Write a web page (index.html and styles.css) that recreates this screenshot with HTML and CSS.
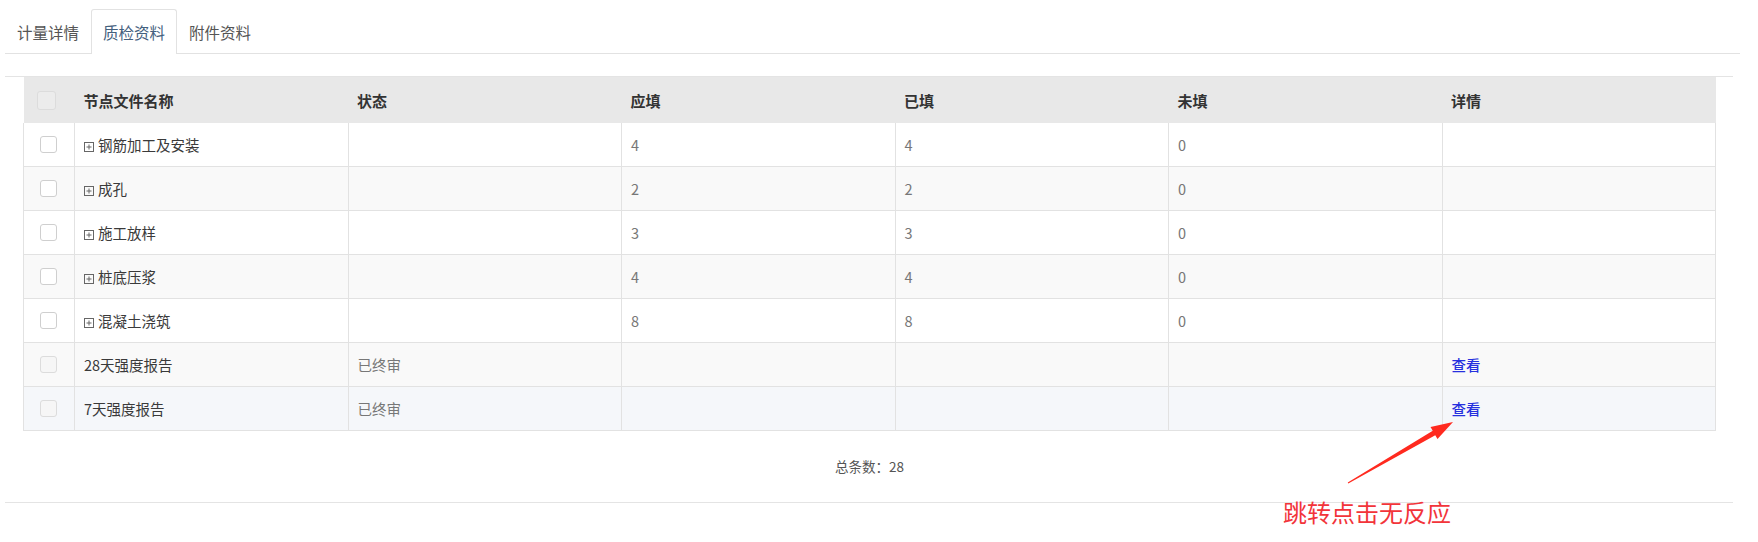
FILE: index.html
```html
<!DOCTYPE html>
<html lang="zh-CN">
<head>
    <meta charset="UTF-8">
    <title>质检资料</title>
    <link rel="stylesheet" href="styles.css">
</head>
<body>
    <div class="page">
        <ul class="tabs">
            <li class="tab">计量详情</li>
            <li class="tab active">质检资料</li>
            <li class="tab">附件资料</li>
        </ul>

        <div class="panel">
            <table class="grid">
                <colgroup>
                    <col class="col-check">
                    <col><col><col><col><col><col>
                </colgroup>
                <thead>
                    <tr>
                        <th class="check"><span class="cb cb-head"></span></th>
                        <th>节点文件名称</th>
                        <th>状态</th>
                        <th>应填</th>
                        <th>已填</th>
                        <th>未填</th>
                        <th>详情</th>
                    </tr>
                </thead>
                <tbody>
                    <tr>
                        <td class="check"><span class="cb"></span></td>
                        <td class="name"><svg class="expand" viewBox="0 0 10 10"><rect x="0.5" y="0.5" width="9" height="9" /><path d="M2.5 5h5M5 2.5v5" /></svg>钢筋加工及安装</td>
                        <td></td>
                        <td class="num">4</td>
                        <td class="num">4</td>
                        <td class="num">0</td>
                        <td></td>
                    </tr>
                    <tr>
                        <td class="check"><span class="cb"></span></td>
                        <td class="name"><svg class="expand" viewBox="0 0 10 10"><rect x="0.5" y="0.5" width="9" height="9" /><path d="M2.5 5h5M5 2.5v5" /></svg>成孔</td>
                        <td></td>
                        <td class="num">2</td>
                        <td class="num">2</td>
                        <td class="num">0</td>
                        <td></td>
                    </tr>
                    <tr>
                        <td class="check"><span class="cb"></span></td>
                        <td class="name"><svg class="expand" viewBox="0 0 10 10"><rect x="0.5" y="0.5" width="9" height="9" /><path d="M2.5 5h5M5 2.5v5" /></svg>施工放样</td>
                        <td></td>
                        <td class="num">3</td>
                        <td class="num">3</td>
                        <td class="num">0</td>
                        <td></td>
                    </tr>
                    <tr>
                        <td class="check"><span class="cb"></span></td>
                        <td class="name"><svg class="expand" viewBox="0 0 10 10"><rect x="0.5" y="0.5" width="9" height="9" /><path d="M2.5 5h5M5 2.5v5" /></svg>桩底压浆</td>
                        <td></td>
                        <td class="num">4</td>
                        <td class="num">4</td>
                        <td class="num">0</td>
                        <td></td>
                    </tr>
                    <tr>
                        <td class="check"><span class="cb"></span></td>
                        <td class="name"><svg class="expand" viewBox="0 0 10 10"><rect x="0.5" y="0.5" width="9" height="9" /><path d="M2.5 5h5M5 2.5v5" /></svg>混凝土浇筑</td>
                        <td></td>
                        <td class="num">8</td>
                        <td class="num">8</td>
                        <td class="num">0</td>
                        <td></td>
                    </tr>
                    <tr>
                        <td class="check"><span class="cb cb-off"></span></td>
                        <td class="name">28天强度报告</td>
                        <td class="status">已终审</td>
                        <td></td>
                        <td></td>
                        <td></td>
                        <td><a class="view" href="#">查看</a></td>
                    </tr>
                    <tr class="hover">
                        <td class="check"><span class="cb cb-off"></span></td>
                        <td class="name">7天强度报告</td>
                        <td class="status">已终审</td>
                        <td></td>
                        <td></td>
                        <td></td>
                        <td><a class="view" href="#">查看</a></td>
                    </tr>
                </tbody>
            </table>
            <div class="total">总条数：28</div>
        </div>

        <!-- red note drawn over the page -->
        <svg class="note-arrow" viewBox="0 0 120 75" width="120" height="75">
            <polygon points="8.25,68.43 95.25,20.16 97.5,24.06 113,7 90.5,11.94 92.75,15.84 7.75,67.57" />
        </svg>
        <div class="note-text">跳转点击无反应</div>
    </div>
</body>
</html>
```

FILE: styles.css
```css
body {
    margin: 0;
    background: #fff;
    font-family: "Noto Sans CJK SC", "Microsoft YaHei", sans-serif;
    color: #333;
}
.page {
    position: relative;
    padding: 9px 18px 0 5px;
    height: 542px;
    box-sizing: border-box;
}

/* tabs */
.tabs {
    list-style: none;
    margin: 0;
    padding: 0;
    display: flex;
    border-bottom: 1px solid #e2e2e2;
}
.tab {
    height: 44px;
    line-height: 44px;
    padding: 0 11px;
    font-size: 15.5px;
    color: #555;
    border: 1px solid transparent;
    border-bottom: none;
    margin-bottom: -1px;
    box-sizing: border-box;
}
.tab.active {
    border-color: #e2e2e2;
    border-radius: 3px 3px 0 0;
    background: #fff;
    height: 45px;
    color: #44607e;
}

/* panel with the grid */
.panel {
    margin-top: 22px;
    margin-right: 7px;
    padding: 0 17px 0 18px;
    border-top: 1px solid #e4e4e4;
    border-bottom: 1px solid #e4e4e4;
}
.grid {
    width: 100%;
    table-layout: fixed;
    border-collapse: collapse;
    font-size: 14.5px;
}
.col-check {
    width: 51px;
}
.grid th {
    height: 46px;
    padding: 0 9px;
    text-align: left;
    font-weight: bold;
    font-size: 15px;
    color: #333;
    background: #e8e8e8;
}
.grid td {
    height: 43px;
    padding: 0 9px;
    border: 1px solid #e2e2e2;
    border-top: none;
    color: #666;
}
.grid tbody tr:nth-child(even) td {
    background: #f9f9f9;
}
.grid tbody tr.hover td {
    background: #f5f7fa;
}
.grid th.check {
    padding: 0 0 0 13px;
}
.grid td.check {
    padding: 0 0 0 16px;
}
.grid td.name {
    color: #3a3a3a;
}
.grid td.num,
.grid td.status {
    color: #777;
}

.cb {
    display: block;
    width: 15px;
    height: 15px;
    border: 1px solid #cfcfcf;
    border-radius: 3px;
    background: #fff;
}
.cb-head {
    width: 17px;
    height: 17px;
    border-color: #dcdcdc;
    background: #ececec;
}
.cb-off {
    border-color: #dcdcdc;
    background: #f6f6f6;
}

.expand {
    width: 10px;
    height: 10px;
    margin-right: 4px;
    vertical-align: -1px;
    fill: none;
    stroke: #666;
    stroke-width: 1;
}

.view {
    color: #2630de;
    text-decoration: none;
    font-weight: 500;
}

.total {
    height: 71px;
    line-height: 71px;
    text-align: center;
    font-size: 13.5px;
    color: #555;
}

/* annotation */
.note-arrow {
    position: absolute;
    left: 1340px;
    top: 415px;
    fill: #ff2a1f;
}
.note-text {
    position: absolute;
    left: 1283px;
    top: 497px;
    font-size: 24px;
    line-height: 30px;
    color: #f2343a;
}
```
